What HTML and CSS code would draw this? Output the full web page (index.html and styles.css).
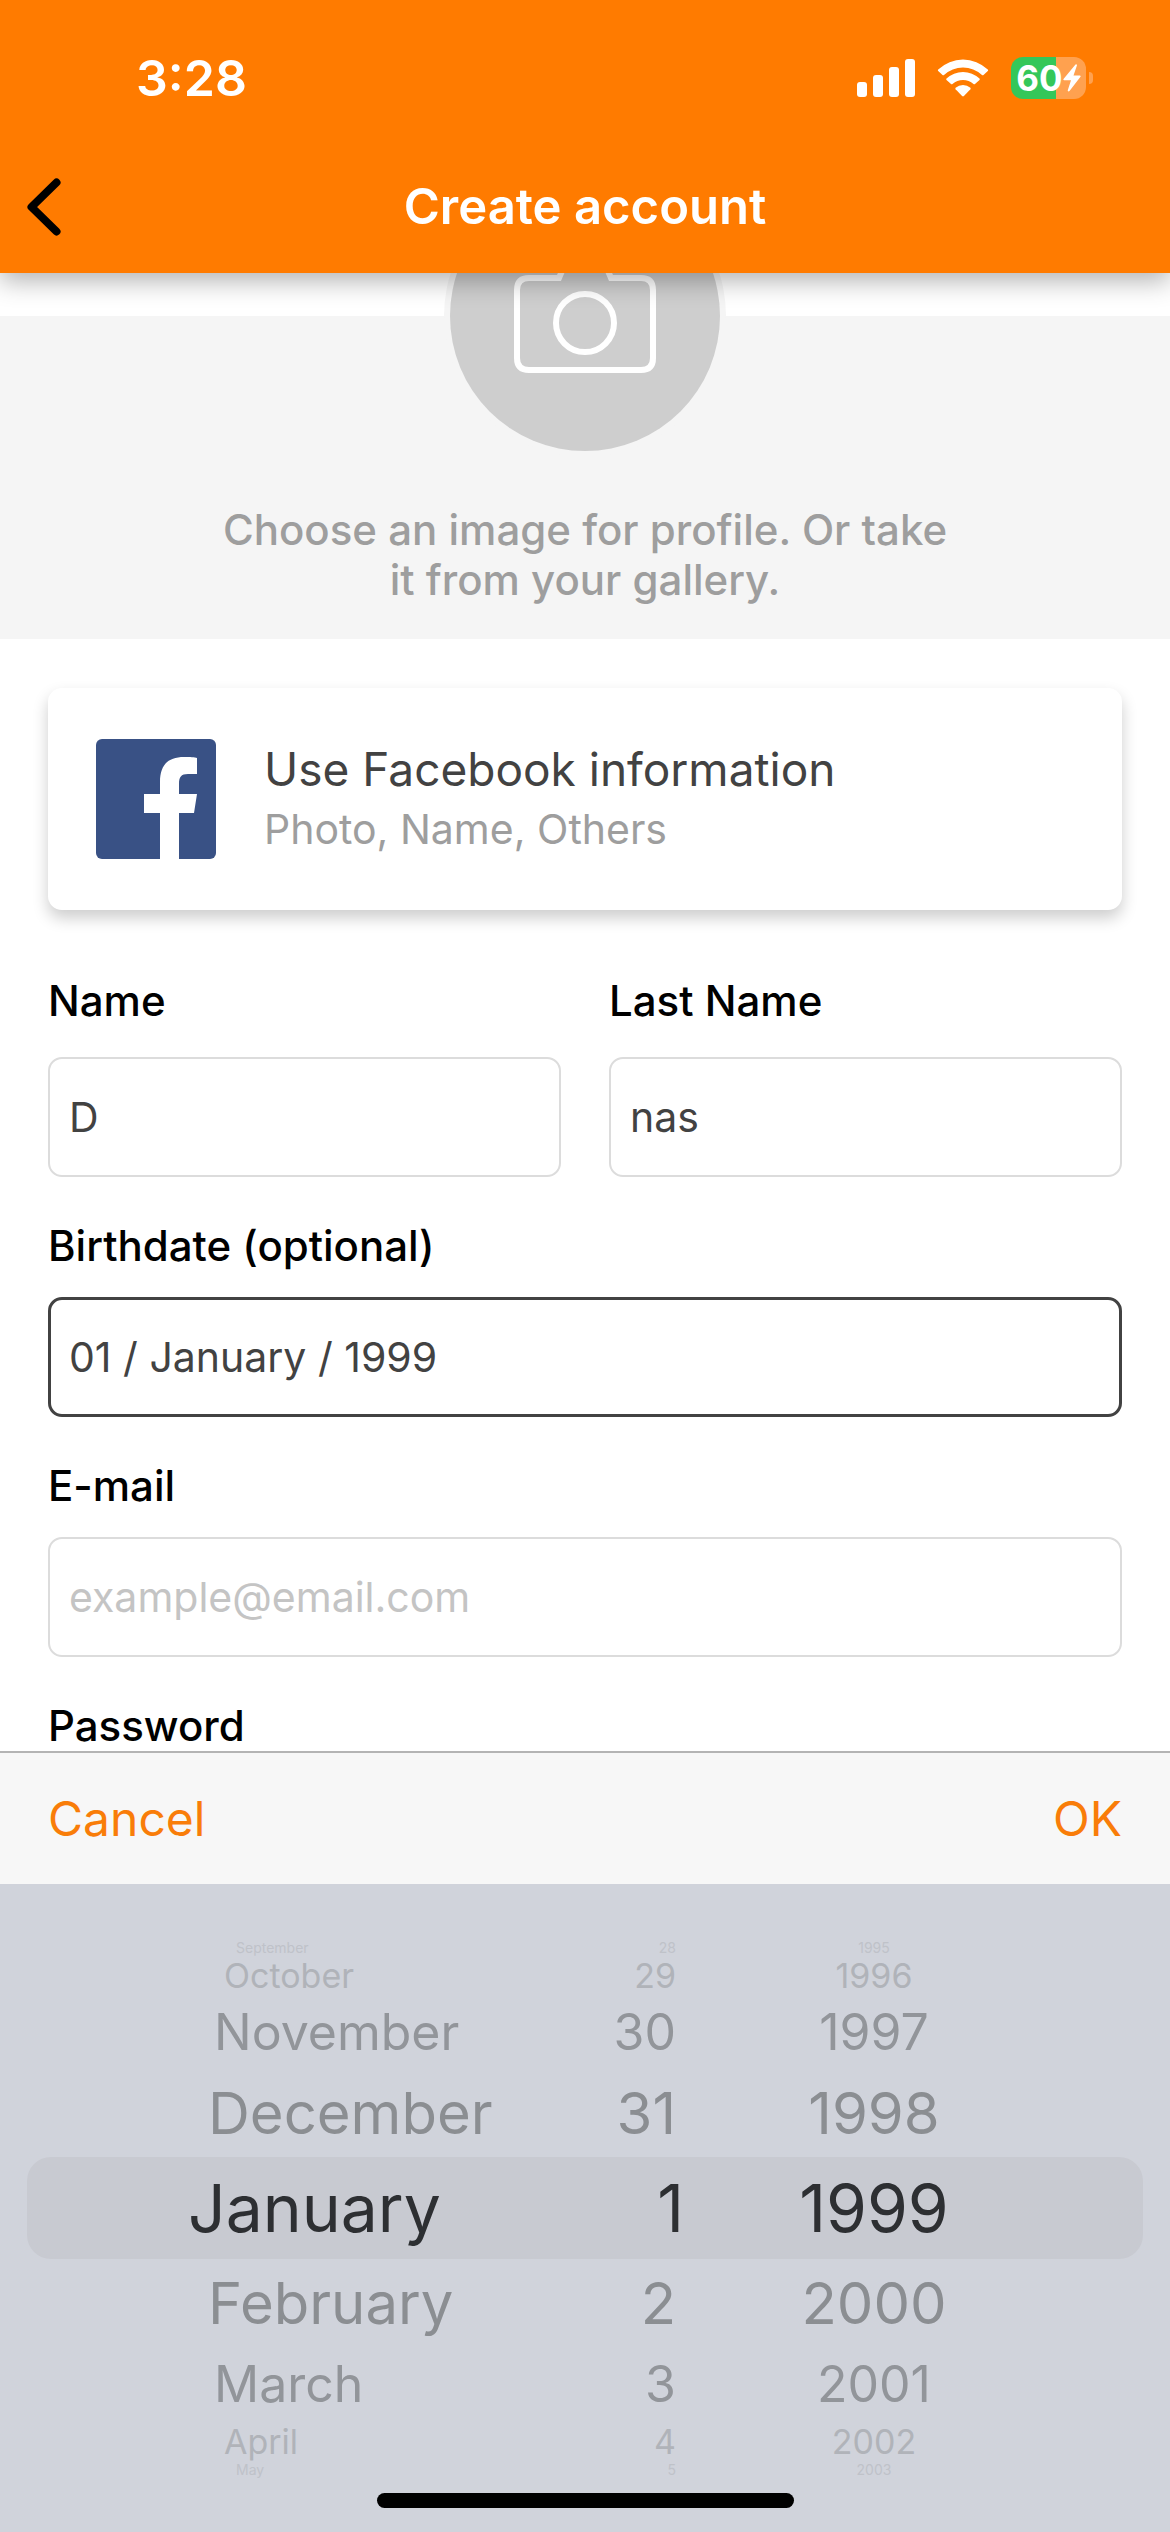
FILE: index.html
```html
<!DOCTYPE html>
<html lang="en">
<head>
    <meta charset="UTF-8">
    <meta name="viewport" content="width=device-width, initial-scale=1.0">
    <title>Create account</title>
    <link rel="stylesheet" href="styles.css">
</head>
<body>
    <header class="header">
        <div class="status-bar">
            <span class="time">3:28</span>
            <div class="status-icons">
                <svg class="signal" viewBox="0 0 58 38" fill="#fff">
                    <rect x="0" y="23" width="10" height="15" rx="3"/>
                    <rect x="16" y="16" width="10" height="22" rx="3"/>
                    <rect x="32" y="8" width="10" height="30" rx="3"/>
                    <rect x="48" y="0" width="10" height="38" rx="3"/>
                </svg>
                <svg class="wifi" viewBox="0 0 52 38" fill="#fff">
                    <path d="M1.200 10.500 A36 36 0 0 1 50.800 10.500 Q51.500 11.300 50.800 12 L46.500 16 Q45.700 16.600 45 16 A28 28 0 0 0 7 16 Q6.300 16.600 5.500 16 L1.200 12 Q0.500 11.300 1.200 10.500Z"/>
                    <path d="M9.500 19.500 A24 24 0 0 1 42.500 19.500 Q43.200 20.300 42.500 21 L38 25 Q37.300 25.600 36.500 25 A16 16 0 0 0 15.500 25 Q14.700 25.600 14 25 L9.500 21 Q8.800 20.300 9.500 19.500Z"/>
                    <path d="M18.600 28.800 A11.500 11.500 0 0 1 33.400 28.800 Q34 29.600 33.400 30.300 L26.900 37 Q26 37.900 25.100 37 L18.600 30.300 Q18 29.600 18.600 28.800Z"/>
                </svg>
                <div class="battery">
                    <span class="battery-level">60</span>
                    <svg class="bolt" viewBox="0 0 18 28" fill="#fff">
                        <path d="M12.500 0.500 L0.500 15 Q0 16.200 1.200 16.200 H8 L4.700 26.500 Q5.200 28.200 6.500 27 L17.500 12.800 Q18 11.500 16.800 11.500 H10.500 L14 1.300 Q13.700 -0.300 12.500 0.500Z"/>
                    </svg>
                </div>
            </div>
        </div>
        <div class="nav-bar">
            <button class="back" type="button" aria-label="Back">
                <svg viewBox="0 0 34 58" fill="none" stroke="#000" stroke-width="8" stroke-linecap="round" stroke-linejoin="round">
                    <path d="M29.500 4.500 L4.500 29 L29.500 53.500"/>
                </svg>
            </button>
            <h1>Create account</h1>
        </div>
    </header>

    <main class="content">
        <section class="profile">
            <button class="avatar" type="button" aria-label="Choose profile image">
                <svg viewBox="0 0 142 124" fill="none" stroke="#fff" stroke-width="6">
                    <path d="M45 29 H15 Q3 29 3 41 V109 Q3 121 15 121 H127 Q139 121 139 109 V41 Q139 29 127 29 H97 L88 8 Q86 3 80 3 H62 Q56 3 54 8 Z"/>
                    <circle cx="71" cy="74" r="29"/>
                </svg>
            </button>
            <p>Choose an image for profile. Or take<br>it from your gallery.</p>
        </section>

        <form class="form">
            <button class="facebook" type="button">
                <svg viewBox="0 0 120 120">
                    <rect width="120" height="120" rx="6" fill="#395185"/>
                    <path d="M64 120 V74 H48 V55 H64 V43 C64 25 73 18 88 18 C94 18 99 18 101 19 V35 H92 C85 35 83 38 83 45 V55 H101 L98 74 H83 V120 Z" fill="#fff"/>
                </svg>
                <span class="facebook-text">
                    <span class="facebook-title">Use Facebook information</span>
                    <span class="facebook-sub">Photo, Name, Others</span>
                </span>
            </button>

            <div class="name-row">
                <div class="field">
                    <label for="name">Name</label>
                    <input type="text" id="name" value="D">
                </div>
                <div class="field">
                    <label for="lastName">Last Name</label>
                    <input type="text" id="lastName" value="nas">
                </div>
            </div>
            <div class="field">
                <label for="birthdate">Birthdate (optional)</label>
                <input class="active" type="text" id="birthdate" value="01 / January / 1999" readonly>
            </div>
            <div class="field">
                <label for="email">E-mail</label>
                <input type="email" id="email" placeholder="example@email.com">
            </div>
            <div class="field">
                <label for="password">Password</label>
                <input type="password" id="password">
            </div>
        </form>
    </main>

    <!-- Date picker -->
    <section class="picker">
        <div class="toolbar">
            <button type="button">Cancel</button>
            <button type="button">OK</button>
        </div>
        <div class="wheels">
            <div class="band"></div>
            <div class="columns">
                <ul class="month" role="listbox" aria-label="Month">
                    <li class="row-4" role="option">September</li>
                    <li class="row-3" role="option">October</li>
                    <li class="row-2" role="option">November</li>
                    <li class="row-1" role="option">December</li>
                    <li class="selected" role="option" aria-selected="true">January</li>
                    <li class="row-1" role="option">February</li>
                    <li class="row-2" role="option">March</li>
                    <li class="row-3" role="option">April</li>
                    <li class="row-4" role="option">May</li>
                </ul>
                <ul class="day" role="listbox" aria-label="Day">
                    <li class="row-4" role="option">28</li>
                    <li class="row-3" role="option">29</li>
                    <li class="row-2" role="option">30</li>
                    <li class="row-1" role="option">31</li>
                    <li class="selected" role="option" aria-selected="true">1</li>
                    <li class="row-1" role="option">2</li>
                    <li class="row-2" role="option">3</li>
                    <li class="row-3" role="option">4</li>
                    <li class="row-4" role="option">5</li>
                </ul>
                <ul class="year" role="listbox" aria-label="Year">
                    <li class="row-4" role="option">1995</li>
                    <li class="row-3" role="option">1996</li>
                    <li class="row-2" role="option">1997</li>
                    <li class="row-1" role="option">1998</li>
                    <li class="selected" role="option" aria-selected="true">1999</li>
                    <li class="row-1" role="option">2000</li>
                    <li class="row-2" role="option">2001</li>
                    <li class="row-3" role="option">2002</li>
                    <li class="row-4" role="option">2003</li>
                </ul>
            </div>
        </div>
        <div class="home-indicator"></div>
    </section>
</body>
</html>
```
FILE: styles.css
```css
* {
    box-sizing: border-box;
}

body {
    font-family: Inter, 'Liberation Sans', sans-serif;
    margin: 0;
    height: 100vh;
    display: flex;
    flex-direction: column;
    overflow: hidden;
    background: #ffffff;
    color: #000000;
}

button {
    font-family: inherit;
    padding: 0;
    border: none;
    background: none;
    cursor: pointer;
}

svg {
    display: block;
}

/* Header */
.header {
    position: relative;
    z-index: 2;
    flex: none;
    background: #ff7b00;
    color: #ffffff;
    box-shadow: 0 8px 24px rgba(0, 0, 0, 0.3);
}

.status-bar {
    display: flex;
    justify-content: space-between;
    align-items: center;
    height: 156px;
    padding: 0 77px 0 136px;
}

.time {
    font-size: 50px;
    font-weight: 600;
}

.status-icons {
    display: flex;
    align-items: center;
    gap: 22px;
}

.signal {
    width: 58px;
    height: 38px;
}

.wifi {
    width: 52px;
    height: 38px;
}

.battery {
    position: relative;
    display: flex;
    align-items: center;
    justify-content: center;
    width: 75px;
    height: 42px;
    margin-right: 7px;
    border-radius: 12px;
    background: linear-gradient(to right, #34c759 60%, #ffa14f 60%);
}

.battery::after {
    content: "";
    position: absolute;
    left: 78px;
    top: 15px;
    width: 4px;
    height: 12px;
    border-radius: 0 4px 4px 0;
    background: #ffa14f;
}

.battery-level {
    font-size: 35px;
    font-weight: 700;
}

.bolt {
    width: 18px;
    height: 28px;
}

.nav-bar {
    display: grid;
    grid-template-columns: 60px 1fr 60px;
    align-items: center;
    height: 117px;
    padding-bottom: 16px;
}

.back svg {
    width: 34px;
    height: 58px;
    margin-left: 27px;
}

.nav-bar h1 {
    margin: 0;
    font-size: 49px;
    font-weight: 600;
    text-align: center;
}

/* Profile image */
.content {
    flex: 1;
    min-height: 0;
    overflow: hidden;
    padding-top: 43px;
}

.profile {
    display: flex;
    flex-direction: column;
    align-items: center;
    padding-bottom: 34px;
    background: #f5f5f5;
}

.avatar {
    display: flex;
    justify-content: center;
    width: 270px;
    height: 270px;
    margin-top: -135px;
    padding-top: 68px;
    border-radius: 50%;
    background: #cecece;
    box-shadow: 0 0 0 6px #f5f5f5;
}

.avatar svg {
    width: 142px;
    height: 124px;
}

.profile p {
    margin: 54px 0 0;
    font-size: 42px;
    font-weight: 500;
    line-height: 50px;
    text-align: center;
    color: #9e9e9e;
}

/* Form */
.form {
    display: flex;
    flex-direction: column;
    gap: 44px;
    padding: 49px 48px;
}

.facebook {
    display: flex;
    align-items: center;
    gap: 48px;
    height: 222px;
    margin-bottom: 22px;
    padding: 0 48px;
    border-radius: 14px;
    background: #ffffff;
    box-shadow: 0 8px 16px rgba(0, 0, 0, 0.2);
    text-align: left;
}

.facebook svg {
    width: 120px;
    height: 120px;
}

.facebook-text {
    display: flex;
    flex-direction: column;
    line-height: 60px;
}

.facebook-title {
    font-size: 46px;
    color: #424242;
}

.facebook-sub {
    font-size: 41px;
    color: #9e9e9e;
}

.name-row {
    display: grid;
    grid-template-columns: 1fr 1fr;
    gap: 48px;
}

.field {
    display: flex;
    flex-direction: column;
    gap: 26px;
}

.name-row .field {
    gap: 31px;
}

.field label {
    font-size: 42px;
    font-weight: 500;
    line-height: 50px;
}

.field input {
    width: 100%;
    height: 120px;
    padding: 0 19px;
    border: 2px solid #dcdcdc;
    border-radius: 14px;
    outline: none;
    background: #ffffff;
    font-family: inherit;
    font-size: 41px;
    color: #424242;
}

.field input.active {
    padding: 0 18px;
    border: 3px solid #424242;
}

.field input::placeholder {
    color: #c4c4c4;
}

/* Picker */
.picker {
    position: relative;
    z-index: 1;
    flex: none;
    padding-bottom: 24px;
    background: #d0d3db;
}

.toolbar {
    display: flex;
    justify-content: space-between;
    align-items: center;
    height: 133px;
    padding: 0 48px;
    border-top: 2px solid #b4b4b4;
    background: #f7f7f7;
}

.toolbar button {
    font-size: 48px;
    color: #f97d09;
}

.wheels {
    display: grid;
    padding: 55px 27px 16px;
}

.band,
.columns {
    grid-area: 1 / 1;
}

.band {
    align-self: center;
    height: 102px;
    border-radius: 24px;
    background: #c8cad1;
}

.columns {
    display: flex;
    justify-content: center;
    padding-right: 28px;
}

.columns ul {
    margin: 0;
    padding: 0;
    list-style: none;
}

.columns li {
    display: flex;
    align-items: center;
    color: #8b8e92;
}

.columns .month {
    width: 400px;
}

.columns .day {
    width: 96px;
    margin-right: 110px;
}

.day li {
    justify-content: flex-end;
}

.columns .year {
    width: 160px;
}

.year li {
    justify-content: center;
}

.columns .selected {
    height: 102px;
    font-size: 66px;
    color: #2d2f32;
}

.columns .row-1 {
    height: 88px;
    font-size: 58px;
}

.columns .row-2 {
    height: 74px;
    font-size: 50px;
    color: #92959a;
}

.columns .row-3 {
    height: 40px;
    font-size: 34px;
    color: #b0b3b9;
}

.columns .row-4 {
    height: 16px;
    font-size: 14px;
    color: #bfc2c9;
}

.month .row-1 {
    padding-left: 20px;
}

.month .row-2 {
    padding-left: 26px;
}

.month .row-3 {
    padding-left: 36px;
}

.month .row-4 {
    padding-left: 48px;
}

.day .row-1,
.day .row-2,
.day .row-3,
.day .row-4 {
    padding-right: 8px;
}

.home-indicator {
    width: 417px;
    height: 15px;
    margin: 0 auto;
    border-radius: 8px;
    background: #000000;
}
```
